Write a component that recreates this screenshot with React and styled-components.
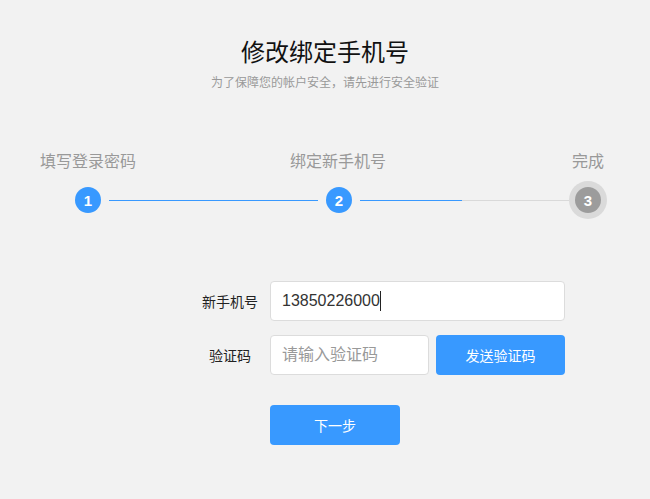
import React from "react";
import styled, { createGlobalStyle } from "styled-components";

const BLUE = "#3899ff";

const GlobalStyle = createGlobalStyle`
  body {
    margin: 0;
    background: #f2f2f2;
    font-family: "Liberation Sans", "Noto Sans CJK SC", sans-serif;
  }
`;

const Page = styled.div`
  width: 650px;
  height: 499px;
  background: #f2f2f2;
  overflow: hidden;
`;

const Header = styled.div`
  padding-top: 41px;
  text-align: center;
`;

const Title = styled.h1`
  margin: 0;
  font-size: 24px;
  line-height: 24px;
  font-weight: normal;
  color: #111;
`;

const Subtitle = styled.p`
  margin: 8px 0 0;
  font-size: 12px;
  line-height: 20px;
  color: #999;
`;

const Steps = styled.div`
  margin-top: 59px;
`;

const Labels = styled.div`
  display: grid;
  grid-template-columns: repeat(3, 100px);
  column-gap: 150px;
  padding-left: 38px;
`;

const Label = styled.div`
  text-align: center;
  font-size: 16px;
  line-height: 20px;
  color: #999;
`;

const Track = styled.div`
  display: flex;
  align-items: center;
  width: 532px;
  height: 38px;
  margin: 9px 0 0 75px;
`;

const Dot = styled.div`
  flex: none;
  width: 26px;
  height: 26px;
  border-radius: 50%;
  background: ${({ $done }) => ($done ? BLUE : "#9c9c9c")};
  color: #fff;
  font-size: 15px;
  font-weight: bold;
  display: flex;
  align-items: center;
  justify-content: center;
`;

const Ring = styled.div`
  flex: none;
  width: 38px;
  height: 38px;
  border-radius: 50%;
  background: #dadada;
  display: flex;
  align-items: center;
  justify-content: center;
`;

const Line = styled.div`
  flex: 1;
  height: 1px;
  margin: 0 ${({ $end }) => ($end ? 0 : 8)}px 0 8px;
  background: ${({ $fill }) =>
    `linear-gradient(to right, ${BLUE} ${$fill}%, #d9d9d9 ${$fill}%)`};
`;

const Form = styled.div`
  margin-top: 62px;
  display: grid;
  grid-template-columns: 80px 295px;
  row-gap: 14px;
  padding-left: 190px;
`;

const FieldLabel = styled.div`
  display: flex;
  align-items: center;
  justify-content: center;
  font-size: 14px;
  color: #222;
`;

const Box = styled.div`
  box-sizing: border-box;
  height: 40px;
  background: #fff;
  border: 1px solid #dcdcdc;
  border-radius: 4px;
  padding: 0 11px;
  display: flex;
  align-items: center;
  font-size: 16px;
  color: #333;
`;

const Caret = styled.span`
  display: inline-block;
  width: 1px;
  height: 20px;
  background: #222;
`;

const Input = styled.input`
  box-sizing: border-box;
  width: 159px;
  height: 40px;
  background: #fff;
  border: 1px solid #dcdcdc;
  border-radius: 4px;
  padding: 0 11px;
  font: inherit;
  font-size: 16px;
  color: #333;
  outline: none;
  &::placeholder {
    color: #999;
  }
`;

const CodeRow = styled.div`
  display: flex;
  gap: 7px;
`;

const Button = styled.button`
  box-sizing: border-box;
  width: ${({ $w }) => $w}px;
  height: 40px;
  border: none;
  border-radius: 4px;
  background: ${BLUE};
  color: #fff;
  font: inherit;
  font-size: 14px;
  cursor: pointer;
`;

const Actions = styled.div`
  grid-column: 2;
  margin-top: 16px;
`;

export default function App() {
  return (
    <Page>
      <GlobalStyle />
      <Header>
        <Title>修改绑定手机号</Title>
        <Subtitle>为了保障您的帐户安全，请先进行安全验证</Subtitle>
      </Header>

      <Steps>
        <Labels>
          <Label>填写登录密码</Label>
          <Label>绑定新手机号</Label>
          <Label>完成</Label>
        </Labels>
        <Track>
          <Dot $done>1</Dot>
          <Line $fill={100} />
          <Dot $done>2</Dot>
          <Line $fill={49} $end />
          <Ring>
            <Dot>3</Dot>
          </Ring>
        </Track>
      </Steps>

      <Form>
        <FieldLabel>新手机号</FieldLabel>
        <Box>
          13850226000
          <Caret />
        </Box>
        <FieldLabel>验证码</FieldLabel>
        <CodeRow>
          <Input placeholder="请输入验证码" />
          <Button $w={129}>发送验证码</Button>
        </CodeRow>
        <Actions>
          <Button $w={130}>下一步</Button>
        </Actions>
      </Form>
    </Page>
  );
}
